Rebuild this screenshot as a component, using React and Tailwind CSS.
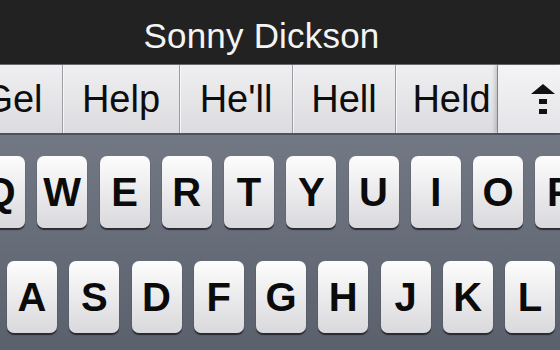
import React from "react";

const row1 = ["Q", "W", "E", "R", "T", "Y", "U", "I", "O", "P"];
const row2 = ["A", "S", "D", "F", "G", "H", "J", "K", "L"];

const suggestions = [
    { word: "Gel", w: "w-[99px] -ml-[36px]" },
    { word: "Help", w: "w-[117px]" },
    { word: "He'll", w: "w-[113px]" },
    { word: "Hell", w: "w-[103px]" },
    { word: "Held", w: "w-[102px] pl-[10px]" },
];

const Key = ({ letter }) => (
    <div className="w-[50px] h-[72px] shrink-0 rounded-[7px] bg-gradient-to-b from-[#fdfdfd] to-[#d9d9dd] shadow-[0_2px_1px_rgba(30,32,40,0.85)] flex items-center justify-center text-[40px] font-bold text-[#0b0b0b] leading-none">
        {letter}
    </div>
);

const App = () => {
    return (
        <div
            className="w-[560px] h-[350px] overflow-hidden bg-[#606572] flex flex-col"
            style={{ fontFamily: '"Liberation Sans", Arial, sans-serif' }}
        >
            {/* title bar */}
            <div className="h-[64px] shrink-0 bg-[#222222] flex items-center justify-center">
                <span className="text-[35px] text-[#f4f4f4] tracking-[0.2px] mt-[9px] mr-[37px]">Sonny Dickson</span>
            </div>

            {/* suggestions */}
            <div className="h-[71px] shrink-0 flex border-t border-[#6a6a6e] border-b-2 border-b-[#4e525c] bg-gradient-to-b from-[#efeff1] to-[#dcdce0]">
                {suggestions.map((s) => (
                    <div
                        key={s.word}
                        className={`${s.w} shrink-0 h-full border-r border-[#9c9ca2] shadow-[1px_0_0_#f6f6f8] flex items-center justify-center text-[38px] text-[#0d0d0d] leading-none`}
                    >
                        {s.word}
                    </div>
                ))}
                <div className="flex-1 h-full bg-gradient-to-b from-[#f4f4f6] to-[#e4e4e8] shadow-[-3px_0_4px_rgba(0,0,0,0.18)] flex items-center justify-end pr-[5px]">
                    <svg width="24" height="31" viewBox="0 0 24 31">
                        <polygon points="12,0 24,10 0,10" fill="#111" />
                        <rect x="8" y="15" width="8" height="5" fill="#111" />
                        <rect x="8" y="25" width="8" height="5" fill="#111" />
                    </svg>
                </div>
            </div>

            {/* keyboard */}
            <div className="flex-1 bg-gradient-to-b from-[#737885] to-[#5b606d] pt-[21px] flex flex-col gap-[33px]">
                <div className="flex gap-[12.25px] -ml-[25px]">
                    {row1.map((k) => (
                        <Key key={k} letter={k} />
                    ))}
                </div>
                <div className="flex gap-[12.25px] ml-[7px]">
                    {row2.map((k) => (
                        <Key key={k} letter={k} />
                    ))}
                </div>
            </div>
        </div>
    );
};

export default App;
